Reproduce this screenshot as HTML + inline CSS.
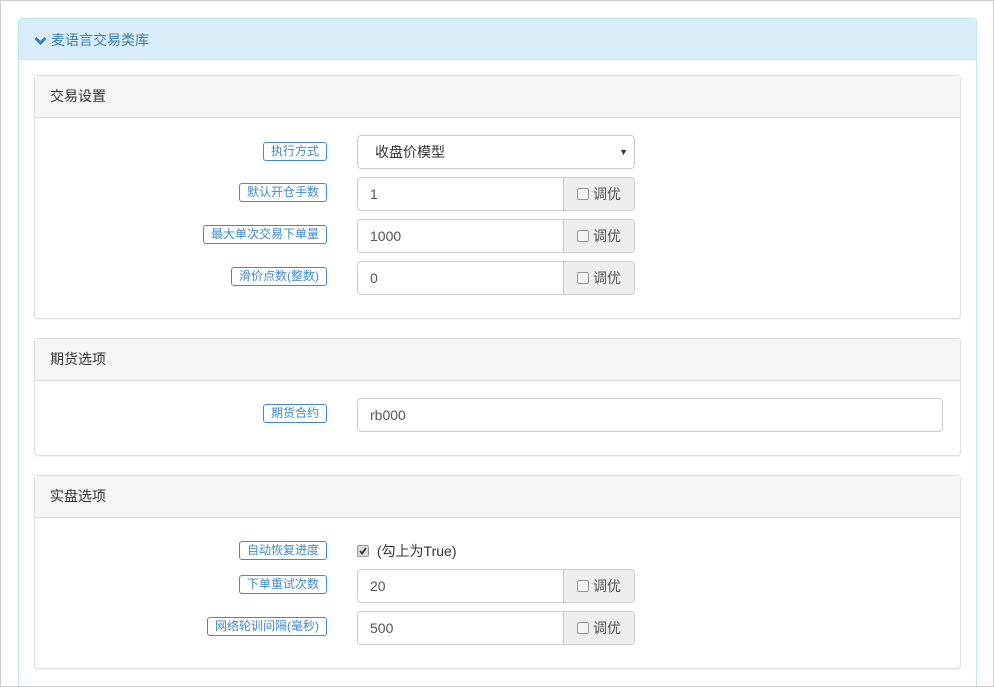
<!DOCTYPE html>
<html style="width:994px;height:687px;overflow:hidden"><head><meta charset="utf-8"><style>
*{box-sizing:border-box;margin:0;padding:0}
body{width:994px;height:687px;overflow:hidden;background:#fff;font-family:"Liberation Sans","Noto Sans CJK SC",sans-serif;font-size:14px;color:#333;position:relative}
.frame{position:absolute;left:0;top:0;width:994px;height:687px;border:1px solid #ccc;z-index:5;pointer-events:none}
.outer{position:absolute;left:18px;top:18px;width:959px;height:669px;border:1px solid #bce8f1;border-bottom:none;border-radius:4px 4px 0 0}
.oh{height:41px;background:#d9edf7;border-bottom:1px solid #bce8f1;color:#3a7fb5;padding:11px 0 0 15px;font-size:14px}
.oh svg{vertical-align:-1px;margin-right:4px}
.p{position:absolute;left:34px;width:927px;border:1px solid #ddd;border-radius:4px;box-shadow:0 1px 1px rgba(0,0,0,.05)}
.ph{height:42px;background:#f5f5f5;border-bottom:1px solid #ddd;padding:10px 0 0 15px;font-size:14px;color:#333}
.lab{position:absolute;right:633px;height:19px;border:1px solid #428bca;border-radius:3px;color:#428bca;font-size:12px;line-height:16px;padding:0 7px;background:#fff;white-space:nowrap}
.inp{position:absolute;left:322px;height:34px;border:1px solid #ccc;border-radius:4px;padding:0 12px;line-height:32px;font-size:14px;color:#555;background:#fff}
.grp{width:278px;overflow:hidden;padding:0}
.grp .v{position:absolute;left:12px;top:0}
.grp .ad{position:absolute;right:0;top:0;width:71px;height:32px;background:#eee;border-left:1px solid #ccc;color:#555;padding-left:13px}
.cb{display:inline-block;width:12px;height:12px;border:1px solid #999;border-radius:2px;background:#f4f4f4;vertical-align:-1px;margin-right:4px;position:relative}
</style></head><body>
<div class="frame"></div>
<div class="outer"><div class="oh"><svg width="13" height="10" viewBox="0 0 13 10"><path d="M1.5 2 L6.5 7 L11.5 2" stroke="#3a7fb5" stroke-width="3" fill="none"/></svg>麦语言交易类库</div></div>

<div class="p" style="top:75px;height:244px"><div class="ph">交易设置</div>
<div class="lab" style="top:66px">执行方式</div>
<div class="inp" style="top:59px;width:278px;color:#333;padding-left:17px">收盘价模型<span style="position:absolute;right:6px;top:0;font-size:9px;color:#333">▼</span></div>
<div class="lab" style="top:107px">默认开仓手数</div>
<div class="inp grp" style="top:101px"><span class="v">1</span><span class="ad"><span class="cb"></span>调优</span></div>
<div class="lab" style="top:149px">最大单次交易下单量</div>
<div class="inp grp" style="top:143px"><span class="v">1000</span><span class="ad"><span class="cb"></span>调优</span></div>
<div class="lab" style="top:191px">滑价点数(整数)</div>
<div class="inp grp" style="top:185px"><span class="v">0</span><span class="ad"><span class="cb"></span>调优</span></div>
</div>

<div class="p" style="top:338px;height:118px"><div class="ph">期货选项</div>
<div class="lab" style="top:65px">期货合约</div>
<div class="inp" style="top:59px;width:586px">rb000</div>
</div>

<div class="p" style="top:475px;height:194px"><div class="ph">实盘选项</div>
<div class="lab" style="top:65px">自动恢复进度</div>
<div style="position:absolute;left:322px;top:65px;font-size:14px;color:#333"><span class="cb" style="background:#ddd"><svg width="10" height="10" viewBox="0 0 10 10" style="position:absolute;left:0;top:0"><path d="M2 5 L4 7.5 L8 2" stroke="#333" stroke-width="1.8" fill="none"/></svg></span> (勾上为True)</div>
<div class="lab" style="top:99px">下单重试次数</div>
<div class="inp grp" style="top:93px"><span class="v">20</span><span class="ad"><span class="cb"></span>调优</span></div>
<div class="lab" style="top:141px">网络轮训间隔(毫秒)</div>
<div class="inp grp" style="top:135px"><span class="v">500</span><span class="ad"><span class="cb"></span>调优</span></div>
</div>
</body></html>
